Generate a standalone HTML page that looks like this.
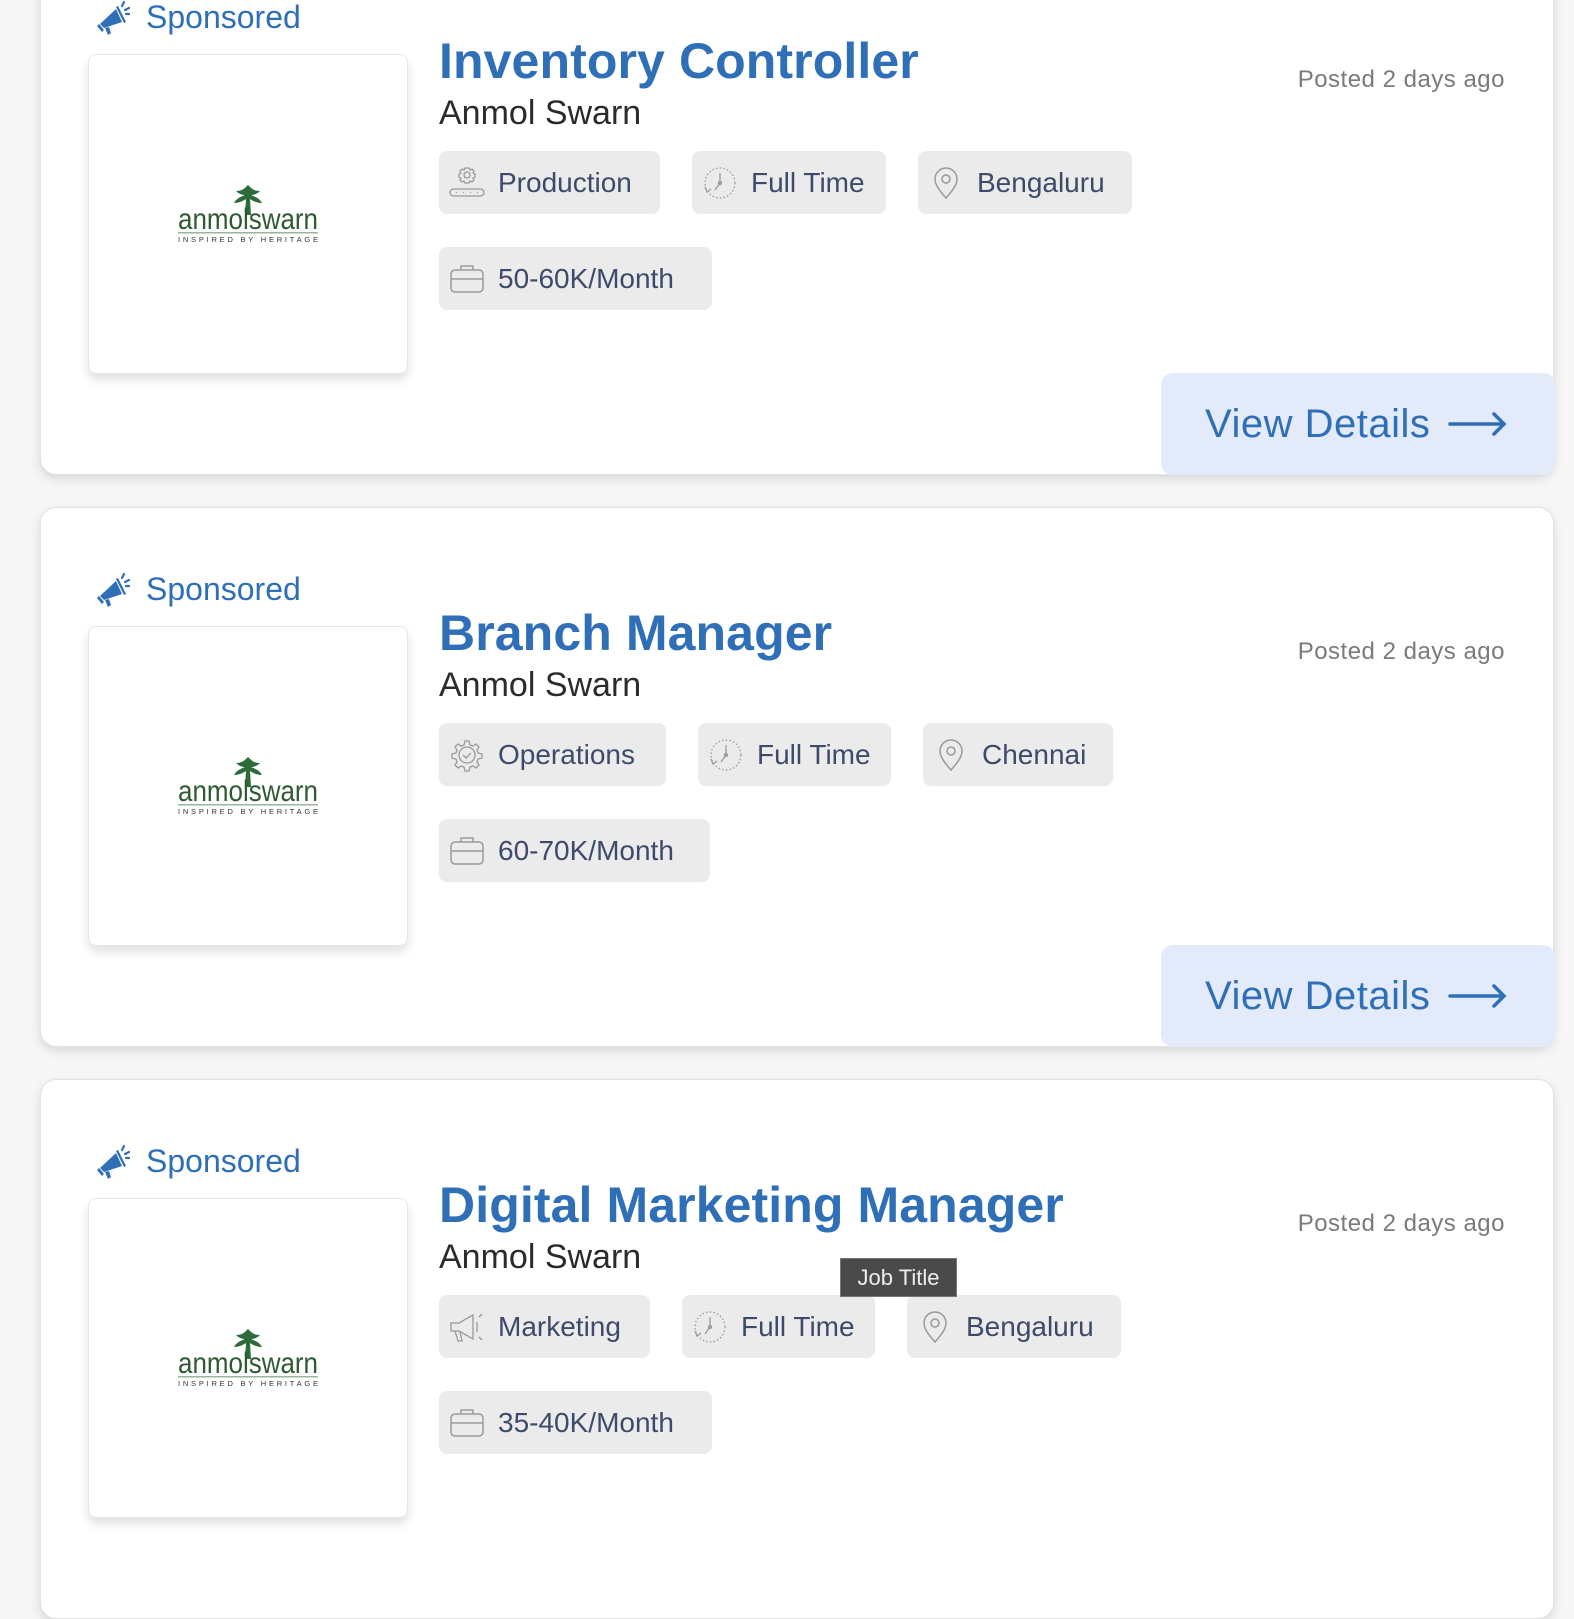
<!DOCTYPE html>
<html><head><meta charset="utf-8"><style>
*{box-sizing:border-box;margin:0;padding:0}
body{width:1574px;height:1466px;overflow:hidden;background:#f6f6f6;font-family:"Liberation Sans",sans-serif;position:relative}
.card{position:absolute;left:40px;width:1514px;height:540px;background:#fff;border:1px solid #e2e2e2;border-radius:16px;box-shadow:0 4px 10px rgba(0,0,0,.12)}
.sp{position:absolute;left:55px;top:63px;display:flex;align-items:center;color:#2f6fb8;font-size:32px}
.sp svg{margin-right:16px}
.logo{position:absolute;left:47px;top:118px;width:320px;height:320px;border:1px solid #e6e6e6;border-radius:8px;box-shadow:0 6px 10px rgba(0,0,0,.12);background:#fff;display:flex;align-items:center;justify-content:center}
.title{position:absolute;left:398px;top:96px;font-size:50px;font-weight:bold;color:#2f6fb8;white-space:nowrap;letter-spacing:.1px}
.co{position:absolute;left:398px;top:158px;font-size:34px;color:#2b2b2b}
.posted{position:absolute;right:48px;top:130px;font-size:24px;color:#7a7a7a;letter-spacing:.5px}
.chip{position:absolute;height:63px;background:#ebebeb;border-radius:8px;display:flex;align-items:center;padding-left:10px;font-size:28px;color:#3e4a6a}
.chip svg{margin-right:13px;flex:none}
.r1{top:215px}.r2{top:311px}
.btn{position:absolute;left:1120px;top:437px;width:394px;height:102px;background:#e3ebfa;border-radius:12px;color:#2f6fb8;font-size:40px;display:flex;align-items:center;padding-left:44px;letter-spacing:.5px}
.btn svg{margin-left:18px}
.tip{position:absolute;left:840px;top:1258px;width:117px;height:39px;background:#4a4a4a;border:1px solid #777;color:#eee;font-size:22px;display:flex;align-items:center;justify-content:center}
</style></head><body>

<svg width="0" height="0" style="position:absolute">
<defs>
<symbol id="mega" viewBox="0 0 34 36"><g fill="#2f6fb8"><path d="M4 24 L20 9 L26 22 L8 28 Z"/><path d="M3 24 L8 30 L6 32 L1 26 Z"/><path d="M9 28 L13 27 L15 33 L12 35 Z"/><path d="M22 6 L30 22 L28 23 L20 7Z"/></g><g stroke="#2f6fb8" stroke-width="2.2" stroke-linecap="round"><path d="M26 6 L28 2"/><path d="M29 10 L33 8"/><path d="M30 14 L33 14"/></g></symbol>
<symbol id="clock" viewBox="0 0 36 36"><g fill="none" stroke="#999" stroke-width="1.3"><circle cx="18" cy="18" r="15" stroke-dasharray="1.5 2.2"/><path d="M18 8 V18 L13 25"/><circle cx="18" cy="18" r="1.5"/><path d="M3 22 L5 27 L9 24"/></g></symbol>
<symbol id="pin" viewBox="0 0 36 36"><g fill="none" stroke="#999" stroke-width="1.5"><path d="M18 33 C10 24 7 19 7 14 A11 11 0 0 1 29 14 C29 19 26 24 18 33Z"/><circle cx="18" cy="14" r="4"/></g></symbol>
<symbol id="case" viewBox="0 0 36 36"><g fill="none" stroke="#999" stroke-width="1.5"><rect x="2" y="9" width="32" height="22" rx="4"/><path d="M12 9 V5 H24 V9"/><path d="M2 18 H34"/></g></symbol>
<symbol id="gear" viewBox="0 0 36 36"><g fill="none" stroke="#999" stroke-width="1.3"><circle cx="18" cy="18" r="8"/><path d="M16 4h4l1 4 3 1 3-2 3 3-2 3 1 3 4 1v4l-4 1-1 3 2 3-3 3-3-2-3 1-1 4h-4l-1-4-3-1-3 2-3-3 2-3-1-3-4-1v-4l4-1 1-3-2-3 3-3 3 2 3-1z"/><path d="M14 18l3 3 5-5"/></g></symbol>
<symbol id="prod" viewBox="0 0 36 36"><g fill="none" stroke="#999" stroke-width="1.3"><circle cx="18" cy="10" r="3"/><path d="M16 3h4l1 2 2-1 2 2-1 2 2 1v3l-2 1 1 2-2 2-2-1-1 2h-4l-1-2-2 1-2-2 1-2-2-1V9l2-1-1-2 2-2 2 1z"/><rect x="1" y="24" width="34" height="7" rx="3.5"/><path d="M7 27.5h1M14 27.5h1M21 27.5h1M28 27.5h1"/></g></symbol>
<symbol id="mkt" viewBox="0 0 36 36"><g fill="none" stroke="#999" stroke-width="1.3"><path d="M2 14 H10 L24 6 V30 L10 22 H2Z"/><path d="M6 22 L9 32 H13 L11 22"/><path d="M28 13 V23M30 8l3-3M30 28l3 3"/></g></symbol>
<symbol id="arrow" viewBox="0 0 60 30"><g fill="none" stroke="#2f6fb8" stroke-width="3.5" stroke-linecap="round"><path d="M2 15 H56 M46 5 L56 15 L46 25"/></g></symbol>
<symbol id="logo" viewBox="0 0 160 70"><g fill="#2e6b3a"><path d="M80 6 C76 10 74 12 68 12 C71 15 74 16 77 16 C72 18 68 20 66 24 C71 24 75 22 78 20 L77 36 H83 L82 20 C85 22 89 24 94 24 C92 20 88 18 83 16 C86 16 89 15 92 12 C86 12 84 10 80 6Z"/></g><text x="80" y="50" text-anchor="middle" font-family="Liberation Sans Narrow,Liberation Sans,sans-serif" font-size="30" fill="#2e5a32" textLength="140" lengthAdjust="spacingAndGlyphs">anmolswarn</text><rect x="10" y="53" width="140" height="1.5" fill="#9ab59e"/><text x="80" y="63" text-anchor="middle" font-family="Liberation Sans,sans-serif" font-size="7.5" fill="#333" textLength="140" lengthAdjust="spacing">INSPIRED BY HERITAGE</text></symbol>
</defs></svg>

<div class="card" style="top:-65px">
 <div class="sp"><svg width="34" height="36"><use href="#mega"/></svg>Sponsored</div>
 <div class="logo"><svg width="160" height="70"><use href="#logo"/></svg></div>
 <div class="title">Inventory Controller</div>
 <div class="co">Anmol Swarn</div>
 <div class="posted">Posted 2 days ago</div>
 <div class="chip r1" style="left:398px;width:221px"><svg width="36" height="36"><use href="#prod"/></svg>Production</div>
 <div class="chip r1" style="left:651px;width:194px"><svg width="36" height="36"><use href="#clock"/></svg>Full Time</div>
 <div class="chip r1" style="left:877px;width:214px"><svg width="36" height="36"><use href="#pin"/></svg>Bengaluru</div>
 <div class="chip r2" style="left:398px;width:273px"><svg width="36" height="36"><use href="#case"/></svg>50-60K/Month</div>
 <div class="btn">View Details<svg width="60" height="30"><use href="#arrow"/></svg></div>
</div>

<div class="card" style="top:507px">
 <div class="sp"><svg width="34" height="36"><use href="#mega"/></svg>Sponsored</div>
 <div class="logo"><svg width="160" height="70"><use href="#logo"/></svg></div>
 <div class="title">Branch Manager</div>
 <div class="co">Anmol Swarn</div>
 <div class="posted">Posted 2 days ago</div>
 <div class="chip r1" style="left:398px;width:227px"><svg width="36" height="36"><use href="#gear"/></svg>Operations</div>
 <div class="chip r1" style="left:657px;width:193px"><svg width="36" height="36"><use href="#clock"/></svg>Full Time</div>
 <div class="chip r1" style="left:882px;width:190px"><svg width="36" height="36"><use href="#pin"/></svg>Chennai</div>
 <div class="chip r2" style="left:398px;width:271px"><svg width="36" height="36"><use href="#case"/></svg>60-70K/Month</div>
 <div class="btn">View Details<svg width="60" height="30"><use href="#arrow"/></svg></div>
</div>

<div class="card" style="top:1079px">
 <div class="sp"><svg width="34" height="36"><use href="#mega"/></svg>Sponsored</div>
 <div class="logo"><svg width="160" height="70"><use href="#logo"/></svg></div>
 <div class="title">Digital Marketing Manager</div>
 <div class="co">Anmol Swarn</div>
 <div class="posted">Posted 2 days ago</div>
 <div class="chip r1" style="left:398px;width:211px"><svg width="36" height="36"><use href="#mkt"/></svg>Marketing</div>
 <div class="chip r1" style="left:641px;width:193px"><svg width="36" height="36"><use href="#clock"/></svg>Full Time</div>
 <div class="chip r1" style="left:866px;width:214px"><svg width="36" height="36"><use href="#pin"/></svg>Bengaluru</div>
 <div class="chip r2" style="left:398px;width:273px"><svg width="36" height="36"><use href="#case"/></svg>35-40K/Month</div>
</div>

<div class="tip">Job Title</div>
</body></html>
